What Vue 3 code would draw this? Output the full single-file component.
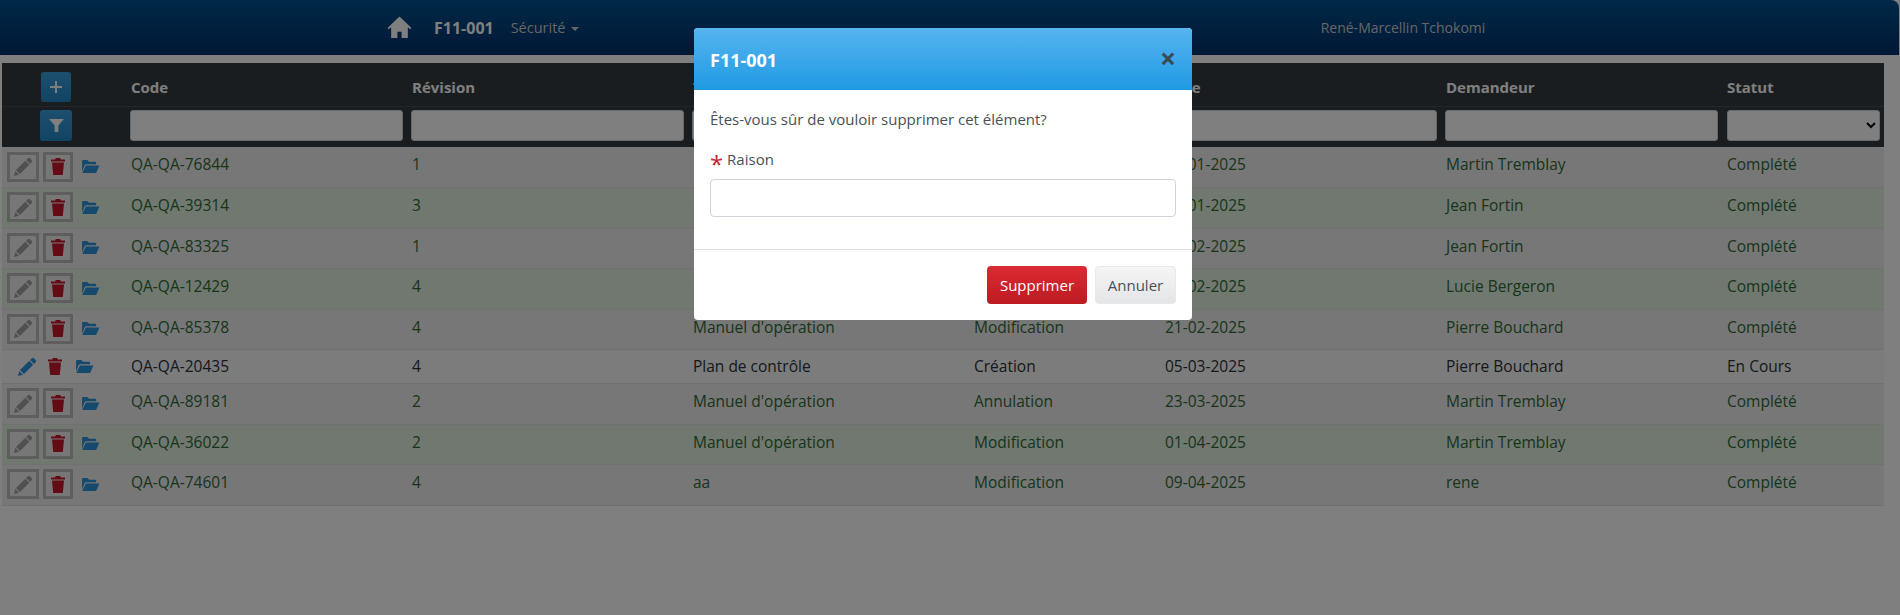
<template>
  <div class="page">
    <nav class="topbar">
      <svg class="home" viewBox="0 0 24 22"><path d="M12 .5 .5 11.500l1.300 1.200L4 10.800V21h6v-6h4v6h6V10.800l2.200 1.900 1.300-1.200z" /></svg>
      <span class="brand">F11-001</span>
      <span class="menu">Sécurité<i class="caret"></i></span>
      <span class="user">René-Marcellin Tchokomi</span>
    </nav>

    <div class="content">
      <table class="grid">
        <colgroup>
          <col style="width: 125px" />
          <col style="width: 281px" />
          <col style="width: 281px" />
          <col style="width: 281px" />
          <col style="width: 191px" />
          <col style="width: 281px" />
          <col style="width: 281px" />
          <col style="width: 161px" />
        </colgroup>
        <thead>
          <tr class="titles">
            <th class="tools"><button class="square plus"><svg viewBox="0 0 12 12"><path d="M5 0h2v5h5v2H7v5H5V7H0V5h5z" /></svg></button></th>
            <th v-for="c in columns" :key="c">{{ c }}</th>
          </tr>
          <tr class="filters">
            <th class="tools"><button class="square funnel"><svg viewBox="0 0 16 14"><path d="M0 0h16L10 7v7H6V7z" /></svg></button></th>
            <th v-for="c in columns.slice(0, 6)" :key="c"><input type="text" /></th>
            <th><select><option></option></select></th>
          </tr>
        </thead>
        <tbody>
          <tr v-for="r in rows" :key="r.code" :class="{ green: r.alt, open: r.open }">
            <td class="tools">
              <div class="actions">
                <span class="act edit">
                  <svg viewBox="0 0 16 16"><path d="M11.500 1.200a1.500 1.500 0 0 1 2.100 0l1.200 1.200a1.500 1.500 0 0 1 0 2.100L13.500 5.800 10.200 2.500zM9.500 3.200l3.300 3.300L5 14.300 1.700 11zM1.100 11.800l3.100 3.100L0 16z" /></svg>
                </span>
                <span class="act trash">
                  <svg viewBox="0 0 14 17"><path d="M4.800 0h4.400l.7 1.400H14v2.100H0V1.400h4.100zM1 4.500h12L11.800 17H2.200z" /></svg>
                </span>
                <span class="folder">
                  <svg viewBox="0 0 20 16"><path d="M1 13.500V2a1 1 0 0 1 1-1h4.500l2 2H15a1 1 0 0 1 1 1v1.500H5.500a2 2 0 0 0-1.800 1.200zM5 7h14.500L16 15H1.300z" /></svg>
                </span>
              </div>
            </td>
            <td>{{ r.code }}</td>
            <td>{{ r.rev }}</td>
            <td>{{ r.type }}</td>
            <td>{{ r.action }}</td>
            <td>{{ r.date }}</td>
            <td>{{ r.who }}</td>
            <td>{{ r.status }}</td>
          </tr>
        </tbody>
      </table>
    </div>

    <div class="scrim"></div>

    <div class="dialog">
      <header class="dialog-head">
        <span class="dialog-title">F11-001</span>
        <span class="close">×</span>
      </header>
      <div class="dialog-body">
        <p>Êtes-vous sûr de vouloir supprimer cet élément?</p>
        <label><b>*</b> Raison</label>
        <input type="text" />
      </div>
      <footer class="dialog-foot">
        <button class="danger">Supprimer</button>
        <button class="cancel">Annuler</button>
      </footer>
    </div>
  </div>
</template>

<script setup>
const columns = ['Code', 'Révision', 'Type', 'Action', 'Date', 'Demandeur', 'Statut']

const rows = [
  { code: 'QA-QA-76844', rev: 1, type: "Manuel d'opération", action: 'Modification', date: '15-01-2025', who: 'Martin Tremblay', status: 'Complété' },
  { code: 'QA-QA-39314', rev: 3, type: "Manuel d'opération", action: 'Création', date: '28-01-2025', who: 'Jean Fortin', status: 'Complété', alt: true },
  { code: 'QA-QA-83325', rev: 1, type: 'Plan de contrôle', action: 'Modification', date: '03-02-2025', who: 'Jean Fortin', status: 'Complété' },
  { code: 'QA-QA-12429', rev: 4, type: "Manuel d'opération", action: 'Annulation', date: '14-02-2025', who: 'Lucie Bergeron', status: 'Complété', alt: true },
  { code: 'QA-QA-85378', rev: 4, type: "Manuel d'opération", action: 'Modification', date: '21-02-2025', who: 'Pierre Bouchard', status: 'Complété' },
  { code: 'QA-QA-20435', rev: 4, type: 'Plan de contrôle', action: 'Création', date: '05-03-2025', who: 'Pierre Bouchard', status: 'En Cours', open: true },
  { code: 'QA-QA-89181', rev: 2, type: "Manuel d'opération", action: 'Annulation', date: '23-03-2025', who: 'Martin Tremblay', status: 'Complété' },
  { code: 'QA-QA-36022', rev: 2, type: "Manuel d'opération", action: 'Modification', date: '01-04-2025', who: 'Martin Tremblay', status: 'Complété', alt: true },
  { code: 'QA-QA-74601', rev: 4, type: 'aa', action: 'Modification', date: '09-04-2025', who: 'rene', status: 'Complété' },
]
</script>

<style>
html, body { margin: 0; background: #fff; overflow: hidden; }
</style>

<style scoped>
.page { position: relative; height: 615px; font-family: "Open Sans", "Noto Sans", sans-serif; font-size: 15.5px; color: #212529; overflow: hidden; }

.topbar { height: 55px; width: 1899px; display: flex; align-items: center; padding-left: 387px; box-sizing: border-box; background: linear-gradient(#00508f, #00306c); color: #fff; border-top-right-radius: 8px; font-size: 14.5px; }
.home { width: 25px; height: 23px; fill: #fff; margin-right: 22px; }
.brand { font-weight: 700; font-size: 16px; margin-right: 17px; }
.menu { color: #ccc; width: 810px; }
.caret { display: inline-block; margin-left: 5px; vertical-align: 2px; border-top: 4px solid; border-left: 4px solid transparent; border-right: 4px solid transparent; }
.user { color: #ccc; font-size: 14px; }

.content { padding: 8px 16px 0 2px; }
.grid { width: 1882px; table-layout: fixed; border-collapse: collapse; }
.grid th { background: #343a40; color: #fff; text-align: left; font-weight: 700; font-size: 15px; }
.titles th { height: 43px; padding: 6px 4px 0; box-sizing: border-box; border-bottom: 1px solid #454d55; }
.filters th { height: 41px; padding: 3px 5px 6px 3px; box-sizing: border-box; }
.filters input, .filters select { display: block; width: 100%; height: 31px; box-sizing: border-box; border: 1px solid #ced4da; border-radius: 3px; background: #fff; }
.filters th:last-child { padding-left: 4px; padding-right: 4px; }
.grid .tools { padding-left: 39px; padding-right: 0; }
.square { display: flex; align-items: center; justify-content: center; border: 0; border-radius: 3px; background: linear-gradient(#3a9fdc, #2388c8); padding: 0; }
.plus { width: 30px; height: 30px; }
.plus svg { width: 12px; height: 12px; fill: #fff; }
.funnel { width: 32px; height: 31px; margin-left: -1px; }
.funnel svg { width: 15px; height: 13px; fill: #fff; }

.grid td { height: 40.5px; padding: 0 4px 5px; box-sizing: border-box; background: #eeeeee; color: #2e6b35; border-bottom: 1px solid #dee2e6; }
.grid tbody tr:first-child td:not(.tools) { padding-bottom: 7px; }
.grid .green td { background: #e2f0e0; }
.grid .open td { height: 34px; padding-bottom: 2px; background: #f8f8f8; color: #2b3237; }
.grid td.tools { padding: 0 0 0 5px; }
.actions { display: flex; align-items: center; margin-top: -1px; }
.act { display: inline-flex; align-items: center; justify-content: center; box-sizing: border-box; height: 30px; border: 3px solid #bdbdbd; background: #eeeeee; }
.edit { width: 32px; margin-right: 4px; }
.trash { width: 30px; margin-right: 8px; }
.edit svg { width: 19px; height: 19px; fill: #a0a0a0; }
.trash svg { width: 14px; height: 17px; fill: #c8182a; }
.folder svg { display: block; width: 19px; height: 15px; fill: #2a94dc; }
.open .act { border: 0; background: none; }
.open .edit { width: 28px; margin-left: 6px; margin-right: 3px; }
.open .edit svg { fill: #2a94dc; }
.open .trash { width: 22px; margin-right: 9px; }

.scrim { position: absolute; inset: 0; background: rgba(0, 0, 0, .5); }

.dialog { position: absolute; left: 694px; top: 28px; width: 498px; height: 292px; background: #fff; border-radius: 4px; overflow: hidden; display: flex; flex-direction: column; font-size: 15px; }
.dialog-head { height: 62px; box-sizing: border-box; padding: 0 16px; display: flex; align-items: center; justify-content: space-between; background: linear-gradient(#56b4ef, #209ae4); color: #fff; font-size: 18px; font-weight: 700; }
.dialog-title { padding-top: 2px; }
.close { color: #3a4a55; font-size: 28px; line-height: 1; margin-bottom: 2px; }
.dialog-body { flex: 1; padding: 0 16px; border-bottom: 1px solid #dee2e6; color: #495057; }
.dialog-body p { margin: 19px 0 0; }
.dialog-body label { display: block; margin-top: 20px; }
.dialog-body label b { color: #c82333; font-size: 24px; font-weight: 400; line-height: 14px; vertical-align: -8px; }
.dialog-body input { display: block; width: 100%; height: 38px; margin-top: 8px; box-sizing: border-box; border: 1px solid #ced4da; border-radius: 4px; }
.dialog-foot { height: 70px; box-sizing: border-box; padding: 16px; display: flex; justify-content: flex-end; gap: 8px; }
.dialog-foot button { height: 38px; border: 0; border-radius: 4px; font: inherit; }
.danger { width: 100px; background: linear-gradient(#dc2a32, #bd1a22); color: #fff; }
.dialog-foot .cancel { width: 81px; border: 1px solid #e8e8ea; background: linear-gradient(#f5f5f5, #e4e5e8); color: #495057; }
</style>
